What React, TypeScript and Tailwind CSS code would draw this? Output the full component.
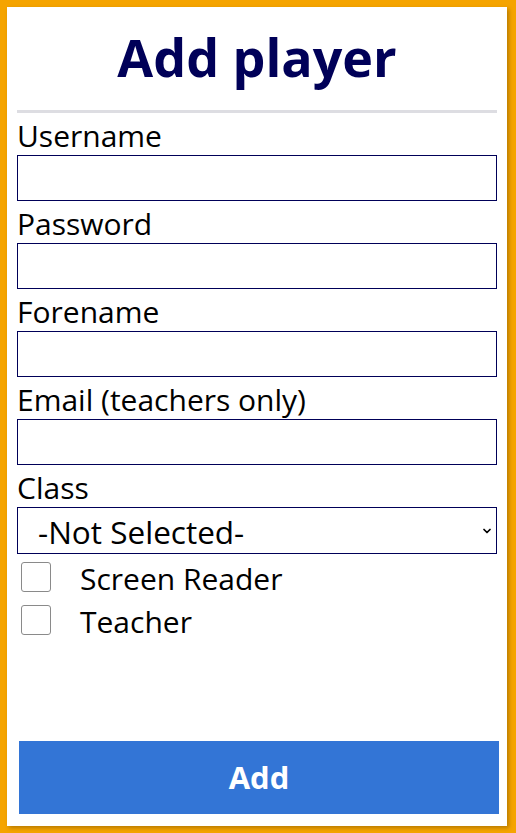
import { ChevronDown } from 'lucide-react';

const fields = ['Username', 'Password', 'Forename', 'Email (teachers only)'];

export default function App() {
  return (
    <div className="min-h-[833px] bg-[#f5a400] pt-[7px] pl-[7px] pr-[9px] pb-[7px] font-['Open_Sans',sans-serif]">
      <div className="flex h-[819px] flex-col bg-white px-[10px] shadow-[2px_2px_4px_rgba(0,0,0,0.25)]">
        <h1 className="pt-[15px] pb-[18px] text-center text-[52px] leading-[70px] font-bold text-[#000058]">
          Add player
        </h1>
        <hr className="h-[3px] border-0 bg-[#dddde2]" />

        {fields.map((field) => (
          <div key={field}>
            <label className="block h-[42px] pt-[3px] text-[30px] leading-[39px] text-black">{field}</label>
            <input type="text" className="block h-[46px] w-full border border-[#000058] bg-white outline-none" />
          </div>
        ))}

        <label className="block h-[42px] pt-[3px] text-[30px] leading-[39px] text-black">Class</label>
        <div className="relative h-[47px] border border-[#000058]">
          <select className="h-full w-full appearance-none bg-white pl-[20px] text-[31.5px] text-black outline-none">
            <option>-Not Selected-</option>
          </select>
          <ChevronDown className="pointer-events-none absolute top-[17px] right-[3px] h-[12px] w-[12px] text-black" strokeWidth={3.5} />
        </div>

        <div className="mt-[8px] flex flex-col gap-[13px] pl-[4px]">
          {['Screen Reader', 'Teacher'].map((item) => (
            <label key={item} className="flex h-[30px] items-center gap-[29px] pt-[3px] text-[30px] text-black">
              <span className="-mt-[3px] h-[30px] w-[30px] shrink-0 rounded-[3px] border border-[#8a8a8a] bg-white" />
              {item}
            </label>
          ))}
        </div>

        <div className="flex-1" />
        <button className="mb-[12px] ml-[2px] h-[73px] w-[480px] bg-[#3375d6] text-[31px] font-bold text-white">
          Add
        </button>
      </div>
    </div>
  );
}
